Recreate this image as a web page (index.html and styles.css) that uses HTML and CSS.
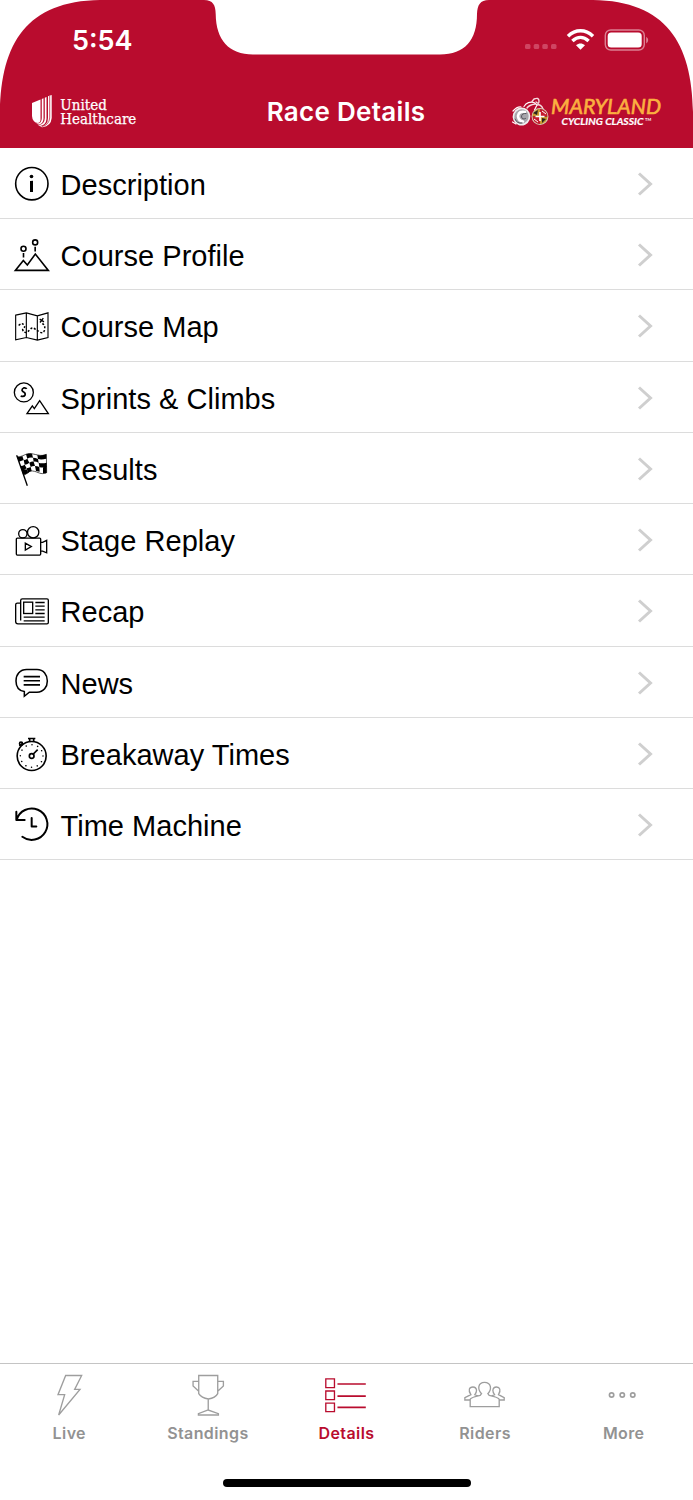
FILE: index.html
```html
<!DOCTYPE html>
<html lang="en">
<head>
<meta charset="utf-8">
<title>Race Details</title>
<link rel="stylesheet" href="styles.css">
</head>
<body>
<div class="screen">
  <header class="header">
    <svg class="header-shape" viewBox="0 0 693 148" aria-hidden="true">
      <path fill="#b90c2e" d="M0 148V112C1 43 27 1 100 0H204C213 0 215.500 5 215.700 14C216 40 229 54.500 253 54.500H440C465 54.500 477 40 477 14C477.500 5 480 0 489 0H593C666 1 692 43 693 112V148Z"/>
    </svg>
    <div class="status">
      <span class="time">5:54</span>
      <svg class="status-icons" viewBox="0 0 130 26" aria-hidden="true">
        <g fill="#cf4562"><rect x="5" y="16" width="5.500" height="5" rx="1.500"/><rect x="13.700" y="16" width="5.500" height="5" rx="1.500"/><rect x="22.300" y="16" width="5.500" height="5" rx="1.500"/><rect x="31" y="16" width="5.500" height="5" rx="1.500"/></g>
        <g fill="none" stroke="#fff" stroke-width="3.500"><path d="M48 8.300C55.500 1 65.500 1 73 8.300"/><path d="M52.400 13C57.500 8.300 63.500 8.300 68.600 13"/></g>
        <path fill="#fff" d="M56 17.200C59 14.800 62 14.800 65 17.200L60.500 21.800Z"/>
        <rect x="85.300" y="2" width="39" height="20" rx="5.500" fill="none" stroke="#dc8093" stroke-width="1.400"/>
        <rect x="87.700" y="4.500" width="34" height="15" rx="3.500" fill="#fff"/>
        <path fill="#dc8093" d="M126.200 8.800Q128.200 10 128.200 12T126.200 15.500Z"/>
      </svg>
    </div>
    <div class="nav">
      <svg class="logo-uhc" viewBox="0 0 110 40" aria-label="United Healthcare">
        <g fill="#fff">
          <path d="M2 11L10.500 7.500V27.500Q10.500 30.500 8 31Q2.500 30.500 2 24Z"/>
          <path d="M11.800 7L13.500 6.300V27Q13 32 8.500 32.500L6 31.500Q11.800 32 11.800 26Z"/>
          <path d="M14.800 5.800L16.500 5V27Q16 33 10 34L8 33Q14.800 32.500 14.800 26Z"/>
          <path d="M18 4.300L21.700 3V26Q21 34 12.500 35.300L9.500 34.800Q18 34 18 26Z"/>
        </g>
        <path d="M19.700 4V26Q19 33 12 34.500" fill="none" stroke="#b90c2e" stroke-width=".7"/>
        <g class="uhc-text"><text x="30.300" y="18" textLength="46.500" lengthAdjust="spacingAndGlyphs">United</text><text x="30.300" y="32" textLength="76" lengthAdjust="spacingAndGlyphs">Healthcare</text></g>
      </svg>
      <h1 class="title">Race Details</h1>
      <svg class="logo-mcc" viewBox="0 0 154 40" aria-label="Maryland Cycling Classic">
        <g fill="none" stroke-linecap="round">
          <ellipse cx="13.500" cy="24.500" rx="8" ry="8.200" fill="#a8a6ac" stroke="#eee" stroke-width="1.700" transform="rotate(20 13.500 24.500)"/>
          <path stroke="#fff" stroke-width="2.600" d="M17 20Q11 18.500 10 24Q10.500 29 15 29.500"/>
          <path stroke="#55555c" stroke-width="1" d="M18 21.500Q13.500 21 13.500 25Q14.500 28 17.500 26.500M7 27Q9 32 14 31"/>
          <path stroke="#fff" stroke-width="1.200" d="M4.500 30L8 32M5 19Q9 14.500 13 15M16 14.500L18 12Q21 9.500 26 10.500L29 13L26.500 18"/>
          <path stroke="#f6dce1" stroke-width="1.400" d="M19 16Q21 13 27 12M24 9.500L26 7Q31 5 31 9T28 10M29 13Q33 12 35 17"/>
        </g>
        <circle cx="32" cy="24.500" r="7.800" fill="#28231e" stroke="#d9cbb5" stroke-width="1.300"/>
        <path d="M32 17A7.500 7.500 0 0 0 24.500 24.500H32ZM32 24.500H39.500A7.500 7.500 0 0 1 32 32Z" fill="#c9982d"/>
        <path d="M25 21L30 18L29 23ZM34 26L38 27L34 31Z" fill="#28231e"/>
        <path d="M32 17A7.500 7.500 0 0 1 39.500 24.500H32ZM32 24.500V32A7.500 7.500 0 0 1 24.500 24.500Z" fill="#c61b2f"/>
        <path d="M27.500 24.500H36.500M32 20V29" stroke="#fff" stroke-width="1.600"/>
        <path d="M34 19L38 22M26 27L30 30" stroke="#fff" stroke-width="1"/>
        <text class="mcc-name" x="43" y="22" textLength="110" lengthAdjust="spacingAndGlyphs">MARYLAND</text>
        <text class="mcc-sub" x="53.500" y="32.500" textLength="82" lengthAdjust="spacingAndGlyphs">CYCLING CLASSIC</text>
        <text class="mcc-tm" x="137" y="29">TM</text>
      </svg>
    </div>
  </header>

  <main class="list">
    <a class="row"><svg class="icon" viewBox="0 -6 168 213.750"><circle cx="95.500" cy="101" r="48.500"/><path class="solid" d="M90 93L99 92V126H90Z"/><circle class="solid" cx="94.500" cy="79.500" r="5.500"/></svg><span class="label">Description</span><svg class="chevron" viewBox="0 0 16 24"><path d="M2 1.500L13.500 12L2 22.500"/></svg></a>
    <a class="row"><svg class="icon" viewBox="0 207.750 168 213.750"><path d="M46 362H145L106 313L82 346L70 332Z"/><circle cx="70.500" cy="297" r="7.500"/><circle cx="105.500" cy="278" r="7.500"/><path d="M70.500 310V323M105.500 291V305"/></svg><span class="label">Course Profile</span><svg class="chevron" viewBox="0 0 16 24"><path d="M2 1.500L13.500 12L2 22.500"/></svg></a>
    <a class="row"><svg class="icon" viewBox="0 1.500 168 213.750"><g class="light"><path d="M47 77L79 70L112 79L144 70V144L112 152L79 144L47 151ZM79 70V144M112 79V152"/><path stroke-width="4.500" stroke-dasharray="6 5" d="M56 108Q66 98 73 107Q76 114 68 120Q70 131 82 128L90 120Q98 111 107 120L119 128Q132 133 134 120Q136 107 127 102"/><path stroke-width="4" d="M119 89L132 97M130 86L120 99"/></g></svg><span class="label">Course Map</span><svg class="chevron" viewBox="0 0 16 24"><path d="M2 1.500L13.500 12L2 22.500"/></svg></a>
    <a class="row"><svg class="icon" viewBox="0 215.250 168 213.750"><g class="mid"><circle cx="71.500" cy="306.500" r="28.500"/><path stroke-width="5" d="M80 296Q78 292 71 293Q66 295 66 300Q67 304 72 306Q77 309 75 315Q71 321 62 317"/><path d="M81 370H145L119 331L103 355L97 347Z"/></g></svg><span class="label">Sprints &amp; Climbs</span><svg class="chevron" viewBox="0 0 16 24"><path d="M2 1.500L13.500 12L2 22.500"/></svg></a>
    <a class="row"><svg class="icon" viewBox="0 9 168 213.750"><path stroke-width="4" d="M50 76L82 167"/><path stroke-width="2" d="M51 80C70 82 76 68 94 71S124 80 139 73L140 128C122 136 115 125 98 123S84 134 70 135"/><path class="solid" d="M51 80Q60 82 67 78L71 90L57 95ZM78 73Q88 69 96 71L99 83Q89 81 82 86ZM112 75Q123 78 139 73V86Q124 90 114 87ZM71 90Q77 90 82 86L88 98Q81 104 74 104ZM99 83Q106 83 114 87L116 98Q107 94 101 95ZM61 108Q69 108 74 104L80 115Q72 121 65 120ZM88 98Q95 94 101 95L105 108Q98 107 92 111ZM116 98Q124 102 140 98V111Q126 114 118 111ZM80 115Q87 114 92 111L95 123Q89 124 84 130ZM105 108Q111 108 118 111L119 125Q111 123 108 123ZM65 120L70 135L84 130L80 118ZM129 113L140 110V128Q135 131 129 129Z"/></svg><span class="label">Results</span><svg class="chevron" viewBox="0 0 16 24"><path d="M2 1.500L13.500 12L2 22.500"/></svg></a>
    <a class="row"><svg class="icon" viewBox="0 222.750 168 213.750"><g class="mid"><rect x="49" y="325" width="73" height="51" rx="3"/><circle cx="68.500" cy="312" r="12.500"/><circle cx="99.500" cy="307.500" r="17"/><path d="M122 338H128L140 332V369L128 364H122M76 340V361L94 350.500Z"/></g></svg><span class="label">Stage Replay</span><svg class="chevron" viewBox="0 0 16 24"><path d="M2 1.500L13.500 12L2 22.500"/></svg></a>
    <a class="row"><svg class="icon" viewBox="0 16.500 168 213.750"><g class="mid"><path d="M62 153V93Q62 88 67 88H141Q145 88 145 92V159Q145 163 141 163H54Q47 163 47 156V106Q47 101 52 101H61"/><rect x="71" y="98" width="27" height="34"/><path d="M106 99H134M106 110H134M106 121H134M106 132H134M71 143H134M71 154H134"/></g></svg><span class="label">Recap</span><svg class="chevron" viewBox="0 0 16 24"><path d="M2 1.500L13.500 12L2 22.500"/></svg></a>
    <a class="row"><svg class="icon" viewBox="0 230.250 168 213.750"><path stroke-width="4.600" d="M80 298H111C131 298 142 314 142 332S131 366 111 366H88L73 378V364C57 361 48 349 48 332C48 312 60 298 80 298Z"/><path stroke-width="5" d="M71 319H120M71 331.500H120M71 344H120"/></svg><span class="label">News</span><svg class="chevron" viewBox="0 0 16 24"><path d="M2 1.500L13.500 12L2 22.500"/></svg></a>
    <a class="row"><svg class="icon" viewBox="0 -6 168 213.750"><circle cx="95" cy="108" r="43.500"/><circle cx="95" cy="108" r="7" stroke-width="5"/><path stroke-width="5" d="M100 102L113 89"/><path stroke-width="5" d="M84 55.500H106M89 57V63M101 57V63"/><path stroke-width="4" d="M58 78L69 68"/><circle cx="63" cy="71" r="4.500"/><circle cx="95" cy="108" r="34" stroke-width="4.500" stroke-linecap="round" stroke-dasharray="0.100 17.702"/></svg><span class="label">Breakaway Times</span><svg class="chevron" viewBox="0 0 16 24"><path d="M2 1.500L13.500 12L2 22.500"/></svg></a>
    <a class="row"><svg class="icon" viewBox="0 207.750 168 213.750"><g class="bold"><path d="M50 300A47 47 0 1 1 67 351M49 276V300.500H74M95 295V320H109"/></g></svg><span class="label">Time Machine</span><svg class="chevron" viewBox="0 0 16 24"><path d="M2 1.500L13.500 12L2 22.500"/></svg></a>
  </main>

  <nav class="tabs">
    <a class="tab"><svg viewBox="0 27 415.800 150"><path d="M197 61.500H245L224 103H240L176 180L194 119H174Z"/></svg><span>Live</span></a>
    <a class="tab"><svg viewBox="415.800 27 415.800 150"><path d="M595 61.500H652V116Q645 129 624 132Q603 129 595 116ZM595 79H578V93L595 109M652 79H669V93L652 109M623.500 132V165M623.500 165L594 176V180H654V176Z"/></svg><span>Standings</span></a>
    <a class="tab active"><svg viewBox="81.600 27 415.800 150"><path d="M228 71.500H254V98H228ZM228 108H254V134H228ZM228 144.500H254V170H228Z"/><path stroke-width="5" d="M263 87H348M263 123.500H348M263 157H348"/></svg><span>Details</span></a>
    <a class="tab"><svg viewBox="497.400 27 415.800 150"><path d="M660 155V133Q662 127 690 121L694 116C681 103 683 82 703 82S726 103 713 116L717 121Q745 127 747 133V155ZM659 135H644V128L662 119C653 105 657 96 668 96Q678 96 679 106Q679 113 674 119L683 123M747 135H762V128L745 119C753 105 749 96 739 96Q729 96 728 106Q728 113 733 119L724 123"/></svg><span>Riders</span></a>
    <a class="tab"><svg viewBox="-16.800 27 415.800 150"><g stroke-width="5"><circle cx="156" cy="120" r="6.500"/><circle cx="188" cy="120" r="6.500"/><circle cx="219.500" cy="120" r="6.500"/></g></svg><span>More</span></a>
  </nav>
  <div class="home"></div>
</div>
</body>
</html>
```
FILE: styles.css
```css
* { box-sizing: border-box; }
body { margin: 0; background: #fff; }
.screen {
  width: 693px;
  height: 1500px;
  display: flex;
  flex-direction: column;
  font-family: "Liberation Sans", Arial, sans-serif;
  color: #000;
  overflow: hidden;
}

.header { position: relative; height: 147.800px; flex: none; }
.header-shape { position: absolute; inset: 0; width: 693px; height: 148px; z-index: -1; }
.status {
  height: 76px;
  padding: 28px 43px 0 72px;
  display: flex;
  justify-content: space-between;
}
.time { font: 600 27px/26px Inter, sans-serif; color: #fff; }
.status-icons { width: 130px; height: 26px; }
.nav {
  height: 72px;
  padding: 0 31px 0 30px;
  display: grid;
  grid-template-columns: 1fr auto 1fr;
  align-items: center;
}
.title { margin: 0; font: 600 26px/32px Inter, sans-serif; letter-spacing: .3px; color: #fff; white-space: nowrap; }
.logo-uhc { width: 110px; height: 40px; }
.logo-mcc { width: 154px; height: 40px; justify-self: end; }
.uhc-text { font: 15.500px "DejaVu Serif Condensed", "DejaVu Serif", serif; fill: #fff; stroke: #fff; stroke-width: .25; }
.mcc-name { font: italic 400 20.500px Lato, sans-serif; fill: #fbb040; stroke: #fbb040; stroke-width: .6; }
.mcc-sub { font: italic 700 10px Lato, sans-serif; fill: #fff; stroke: #fff; stroke-width: .2; }
.mcc-tm { font: 700 4px Lato, sans-serif; fill: #fff; }

.list { flex: 1; }
.row {
  height: 71.250px;
  display: flex;
  align-items: center;
  padding-right: 40px;
  border-bottom: 1px solid #dcdcdc;
}
.icon { width: 56px; height: 71.250px; margin-top: 1px; flex: none; fill: none; stroke: #000; stroke-width: 4.800; }
.icon .light { stroke-width: 3.400; }
.icon .mid { stroke-width: 4; }
.icon .bold { stroke-width: 6; stroke-linecap: round; stroke-linejoin: round; }
.icon .solid { fill: #000; stroke: none; }
.label { flex: 1; padding: 4px 0 0 4.500px; font-size: 29px; line-height: 34px; letter-spacing: .03px; white-space: nowrap; }
.chevron { width: 16px; height: 24px; margin-top: 2px; fill: none; stroke: #cfcfcf; stroke-width: 3; }

.tabs { height: 91px; flex: none; display: flex; border-top: 1px solid #c4c4c4; }
.tab { flex: 1; text-align: center; color: #929292; font: 600 16px/20px Inter, sans-serif; letter-spacing: .4px; }
.tab svg { display: block; width: 138.600px; height: 50px; overflow: visible; fill: none; stroke: #9e9e9e; stroke-width: 4; }
.tab span { display: block; margin-top: 8.500px; }
.tab.active { color: #b90c2e; }
.tab.active svg { stroke: #b90c2e; }
.home { flex: none; width: 248px; height: 8px; margin: 24.500px 0 13.500px 223px; border-radius: 4px; background: #000; }
```
